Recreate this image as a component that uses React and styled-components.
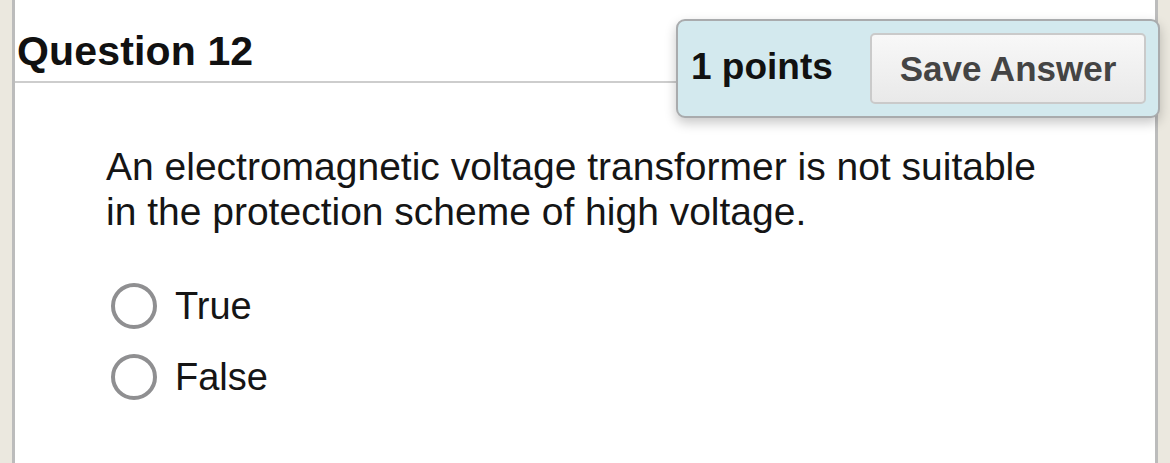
import React from "react";
import styled, { createGlobalStyle } from "styled-components";

const GlobalStyle = createGlobalStyle`
  html, body {
    margin: 0;
    padding: 0;
    background: #ebe8df;
  }
  body {
    font-family: "Liberation Sans", Arial, Helvetica, sans-serif;
    color: #151515;
  }
`;

const Page = styled.div`
  width: 1170px;
  height: 463px;
  box-sizing: border-box;
  padding: 0 12px;
  overflow: hidden;
`;

const Panel = styled.main`
  height: 100%;
  box-sizing: border-box;
  background: #ffffff;
  border-left: 3px solid #bcbcbc;
  border-right: 3px solid #bcbcbc;
`;

const Header = styled.header`
  position: relative;
  padding: 31px 0 9px 2px;
  border-bottom: 2px solid #cdcdcd;
`;

const Title = styled.h2`
  margin: 0;
  font-size: 41px;
  line-height: 41px;
  font-weight: 700;
  color: #111;
  letter-spacing: 0.15px;
`;

const PointsBox = styled.div`
  position: absolute;
  top: 19px;
  right: -5px;
  width: 484px;
  height: 99px;
  box-sizing: border-box;
  display: flex;
  align-items: center;
  justify-content: space-between;
  padding: 0 12px 0 13px;
  background: #d3e9ee;
  border: 2px solid #a9abad;
  border-radius: 9px;
  box-shadow: 0 5px 12px rgba(0, 0, 0, 0.22);
`;

const Points = styled.span`
  font-size: 37px;
  font-weight: 700;
  color: #111;
  margin-top: -3px;
`;

const SaveButton = styled.button`
  width: 276px;
  height: 71px;
  box-sizing: border-box;
  font-family: inherit;
  font-size: 35px;
  font-weight: 700;
  color: #444;
  background: linear-gradient(#f8f8f8, #e9e9e9);
  border: 2px solid #cacaca;
  border-radius: 5px;
  padding: 0;
  cursor: pointer;
`;

const Body = styled.section`
  padding: 61px 0 0 91px;
`;

const QuestionText = styled.p`
  margin: 0;
  font-size: 39px;
  line-height: 45px;
  color: #151515;
  width: 960px;
`;

const Options = styled.div`
  display: flex;
  flex-direction: column;
  gap: 25px;
  margin-top: 49px;
  margin-left: 5px;
`;

const Option = styled.label`
  display: flex;
  align-items: center;
  gap: 18px;
  height: 46px;
  cursor: pointer;
`;

const Radio = styled.span`
  width: 46px;
  height: 46px;
  box-sizing: border-box;
  border-radius: 50%;
  border: 4px solid #8f8f91;
  background: #fff;
  flex-shrink: 0;
`;

const OptionLabel = styled.span`
  font-size: 38px;
  line-height: 46px;
  color: #151515;
`;

export default function App() {
  return (
    <>
      <GlobalStyle />
      <Page>
        <Panel>
          <Header>
            <Title>Question 12</Title>
            <PointsBox>
              <Points>1 points</Points>
              <SaveButton type="button">Save Answer</SaveButton>
            </PointsBox>
          </Header>
          <Body>
            <QuestionText>
              An electromagnetic voltage transformer is not suitable
              <br />
              in the protection scheme of high voltage.
            </QuestionText>
            <Options>
              <Option>
                <Radio />
                <OptionLabel>True</OptionLabel>
              </Option>
              <Option>
                <Radio />
                <OptionLabel>False</OptionLabel>
              </Option>
            </Options>
          </Body>
        </Panel>
      </Page>
    </>
  );
}
